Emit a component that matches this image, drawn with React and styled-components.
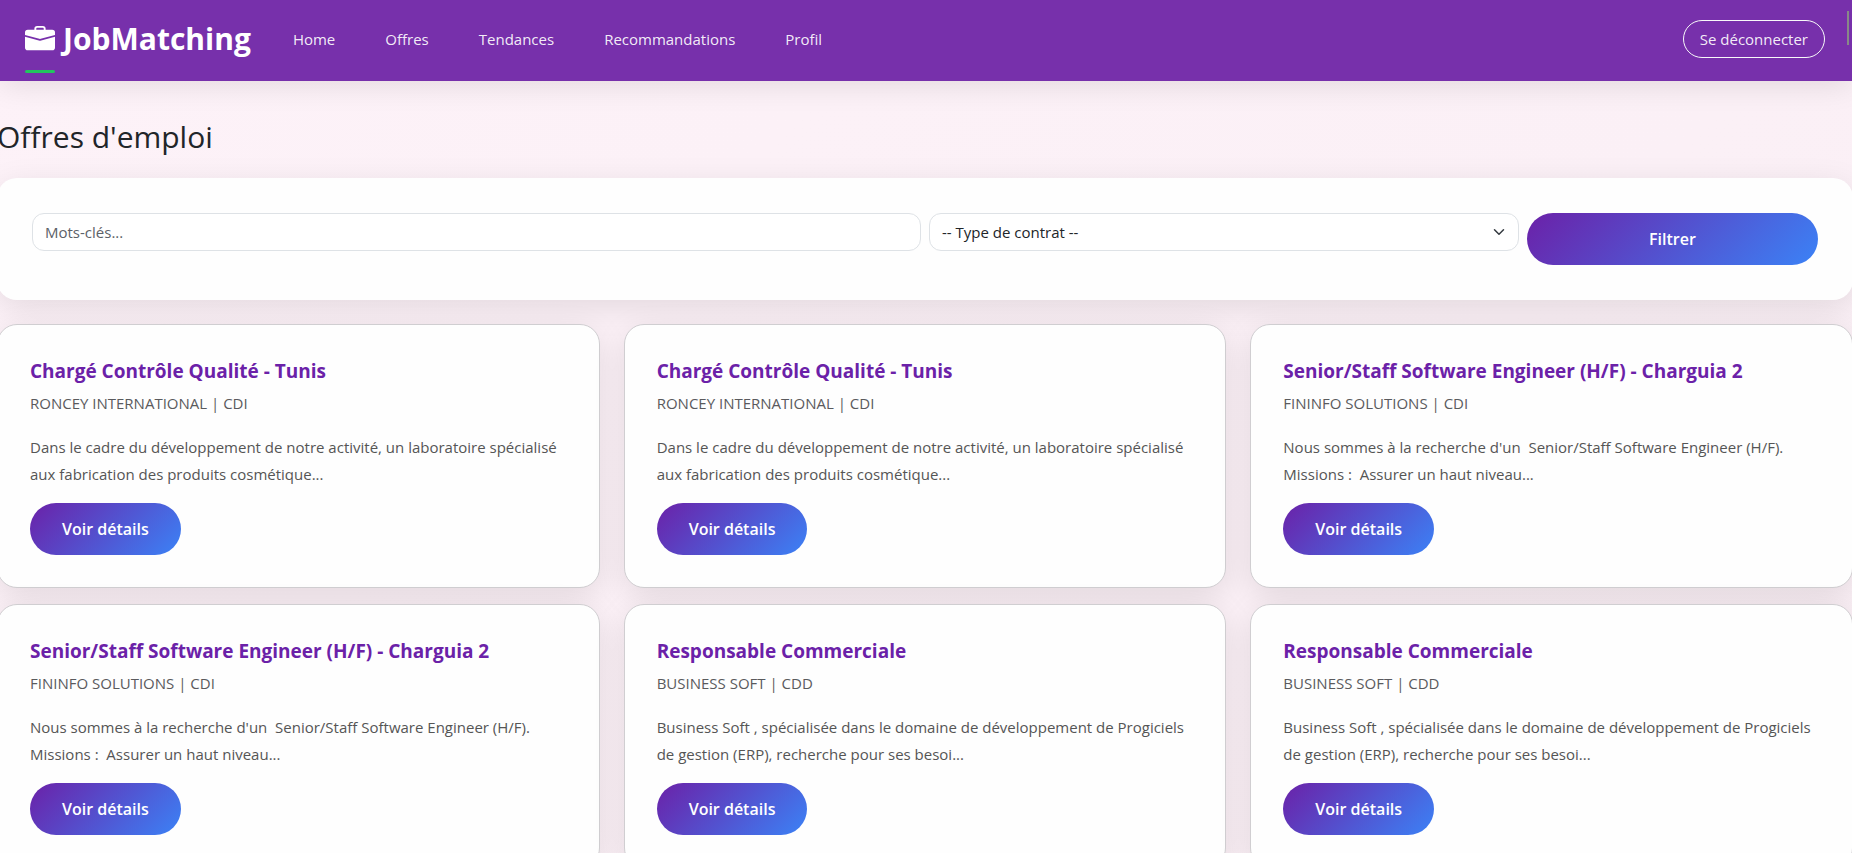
import React from "react";
import styled, { createGlobalStyle } from "styled-components";
import { BsBriefcaseFill } from "react-icons/bs";

const GlobalStyle = createGlobalStyle`
  *, *::before, *::after { box-sizing: border-box; }
  html { scrollbar-width: none; }
  body {
    margin: 0;
    min-height: 100vh;
    overflow-x: hidden;
    font-family: "Open Sans", "Noto Sans", sans-serif;
    font-size: 15px;
    line-height: 24px;
    color: #212529;
    background: linear-gradient(135deg, #fdf2f8, #faeff5);
  }
`;

const Navbar = styled.header`
  position: relative;
  z-index: 1;
  display: flex;
  align-items: center;
  height: 81px;
  padding: 0 27px 4px 25px;
  background: #7730ab;
  box-shadow: 0 4px 30px rgba(0, 0, 0, 0.1);
`;

const Brand = styled.a`
  position: relative;
  display: flex;
  align-items: center;
  gap: 8px;
  margin-right: 17px;
  color: #fff;
  font-size: 30px;
  font-weight: 700;
  line-height: 44px;
  text-decoration: none;

  svg { width: 30px; height: 30px; }

  &::after {
    content: "";
    position: absolute;
    left: 0;
    bottom: -12px;
    width: 30px;
    height: 3px;
    border-radius: 2px;
    background: #22c55e;
  }
`;

const NavLinks = styled.nav`
  display: flex;
  flex: 1;
`;

const NavLink = styled.a`
  padding: 8px 25px;
  color: rgba(255, 255, 255, 0.92);
  text-decoration: none;
`;

const LogoutButton = styled.button`
  height: 38px;
  padding: 0 16px;
  border: 1px solid #f8f9fa;
  border-radius: 19px;
  background: transparent;
  color: rgba(255, 255, 255, 0.92);
  font: inherit;
`;

const ScrollThumb = styled.span`
  position: absolute;
  top: 11px;
  right: 3px;
  width: 2px;
  height: 34px;
  background: #888;
`;

const Main = styled.main`
  margin: 0 -1px 0 -3px;
  padding: 36px 0 24px;
`;

const PageTitle = styled.h1`
  margin: 0 0 21px;
  font-size: 30px;
  font-weight: 400;
  line-height: 40px;
`;

const panelShadow = "0 8px 32px rgba(0, 0, 0, 0.1)";

const FilterForm = styled.form`
  display: grid;
  grid-template-columns: repeat(12, minmax(0, 1fr));
  align-items: start;
  gap: 8px;
  margin-bottom: 24px;
  padding: 35px;
  border-radius: 20px;
  background: #fefefe;
  box-shadow: ${panelShadow};
`;

const KeywordInput = styled.input`
  grid-column: span 6;
  width: 100%;
  height: 38px;
  padding: 0 12px;
  border: 1px solid #dee2e6;
  border-radius: 12px;
  background: #fff;
  color: #212529;
  font: inherit;

  &::placeholder { color: #5c6168; opacity: 1; }
`;

const SelectField = styled.div`
  position: relative;
  grid-column: span 4;

  svg {
    position: absolute;
    top: 13px;
    right: 14px;
    pointer-events: none;
  }
`;

const ContractSelect = styled.select`
  display: block;
  width: 100%;
  height: 38px;
  padding: 0 36px 0 12px;
  border: 1px solid #dee2e6;
  border-radius: 12px;
  appearance: none;
  background: #fff;
  color: #212529;
  font: inherit;
`;

const PrimaryButton = styled.button`
  grid-column: span 2;
  height: 52px;
  padding: 0 32px;
  border: 0;
  border-radius: 26px;
  background: linear-gradient(135deg, #6b21a8, #3b82f6);
  color: #fff;
  font: inherit;
  font-size: 16px;
  font-weight: 600;
`;

const OfferGrid = styled.section`
  display: grid;
  grid-template-columns: repeat(3, minmax(0, 1fr));
  gap: 16px 24px;
`;

const OfferCard = styled.article`
  padding: 32px;
  border: 1px solid #d0ced1;
  border-radius: 20px;
  background: #fefefe;
  box-shadow: ${panelShadow};
`;

const OfferTitle = styled.h2`
  margin: 0 0 6px;
  color: #6b21a8;
  font-size: 19px;
  font-weight: 700;
  line-height: 28px;
`;

const OfferCompany = styled.p`
  margin: 0 0 19px;
  color: #5a5a5d;
  line-height: 24px;
`;

const OfferText = styled.p`
  margin: 0 0 15px;
  color: #555;
  line-height: 27px;
  white-space: pre-wrap;
`;

const quality = {
  title: "Chargé Contrôle Qualité - Tunis",
  company: "RONCEY INTERNATIONAL | CDI",
  text: "Dans le cadre du développement de notre activité, un laboratoire spécialisé aux fabrication des produits cosmétique...",
};
const engineer = {
  title: "Senior/Staff Software Engineer (H/F) - Charguia 2",
  company: "FININFO SOLUTIONS | CDI",
  text: "Nous sommes à la recherche d'un  Senior/Staff Software Engineer (H/F). Missions :  Assurer un haut niveau...",
};
const sales = {
  title: "Responsable Commerciale",
  company: "BUSINESS SOFT | CDD",
  text: "Business Soft , spécialisée dans le domaine de développement de Progiciels de gestion (ERP), recherche pour ses besoi...",
};

const offers = [quality, quality, engineer, engineer, sales, sales];
const links = ["Home", "Offres", "Tendances", "Recommandations", "Profil"];

export default function App() {
  return (
    <>
      <GlobalStyle />
      <Navbar>
        <Brand href="#">
          <BsBriefcaseFill aria-hidden="true" />
          JobMatching
        </Brand>
        <NavLinks>
          {links.map((label) => (
            <NavLink key={label} href="#">{label}</NavLink>
          ))}
        </NavLinks>
        <LogoutButton type="button">Se déconnecter</LogoutButton>
        <ScrollThumb />
      </Navbar>
      <Main>
        <PageTitle>Offres d'emploi</PageTitle>
        <FilterForm onSubmit={(event) => event.preventDefault()}>
          <KeywordInput type="text" placeholder="Mots-clés..." aria-label="Mots-clés" />
          <SelectField>
            <ContractSelect aria-label="Type de contrat" defaultValue="">
              <option value="">-- Type de contrat --</option>
              <option value="CDI">CDI</option>
              <option value="CDD">CDD</option>
            </ContractSelect>
            <svg width="12" height="12" viewBox="0 0 16 16" fill="none" stroke="#343a40" strokeWidth="2" strokeLinecap="round" strokeLinejoin="round" aria-hidden="true">
              <path d="m2 5 6 6 6-6" />
            </svg>
          </SelectField>
          <PrimaryButton type="submit">Filtrer</PrimaryButton>
        </FilterForm>
        <OfferGrid>
          {offers.map((offer, index) => (
            <OfferCard key={index}>
              <OfferTitle>{offer.title}</OfferTitle>
              <OfferCompany>{offer.company}</OfferCompany>
              <OfferText>{offer.text}</OfferText>
              <PrimaryButton type="button">Voir détails</PrimaryButton>
            </OfferCard>
          ))}
        </OfferGrid>
      </Main>
    </>
  );
}
